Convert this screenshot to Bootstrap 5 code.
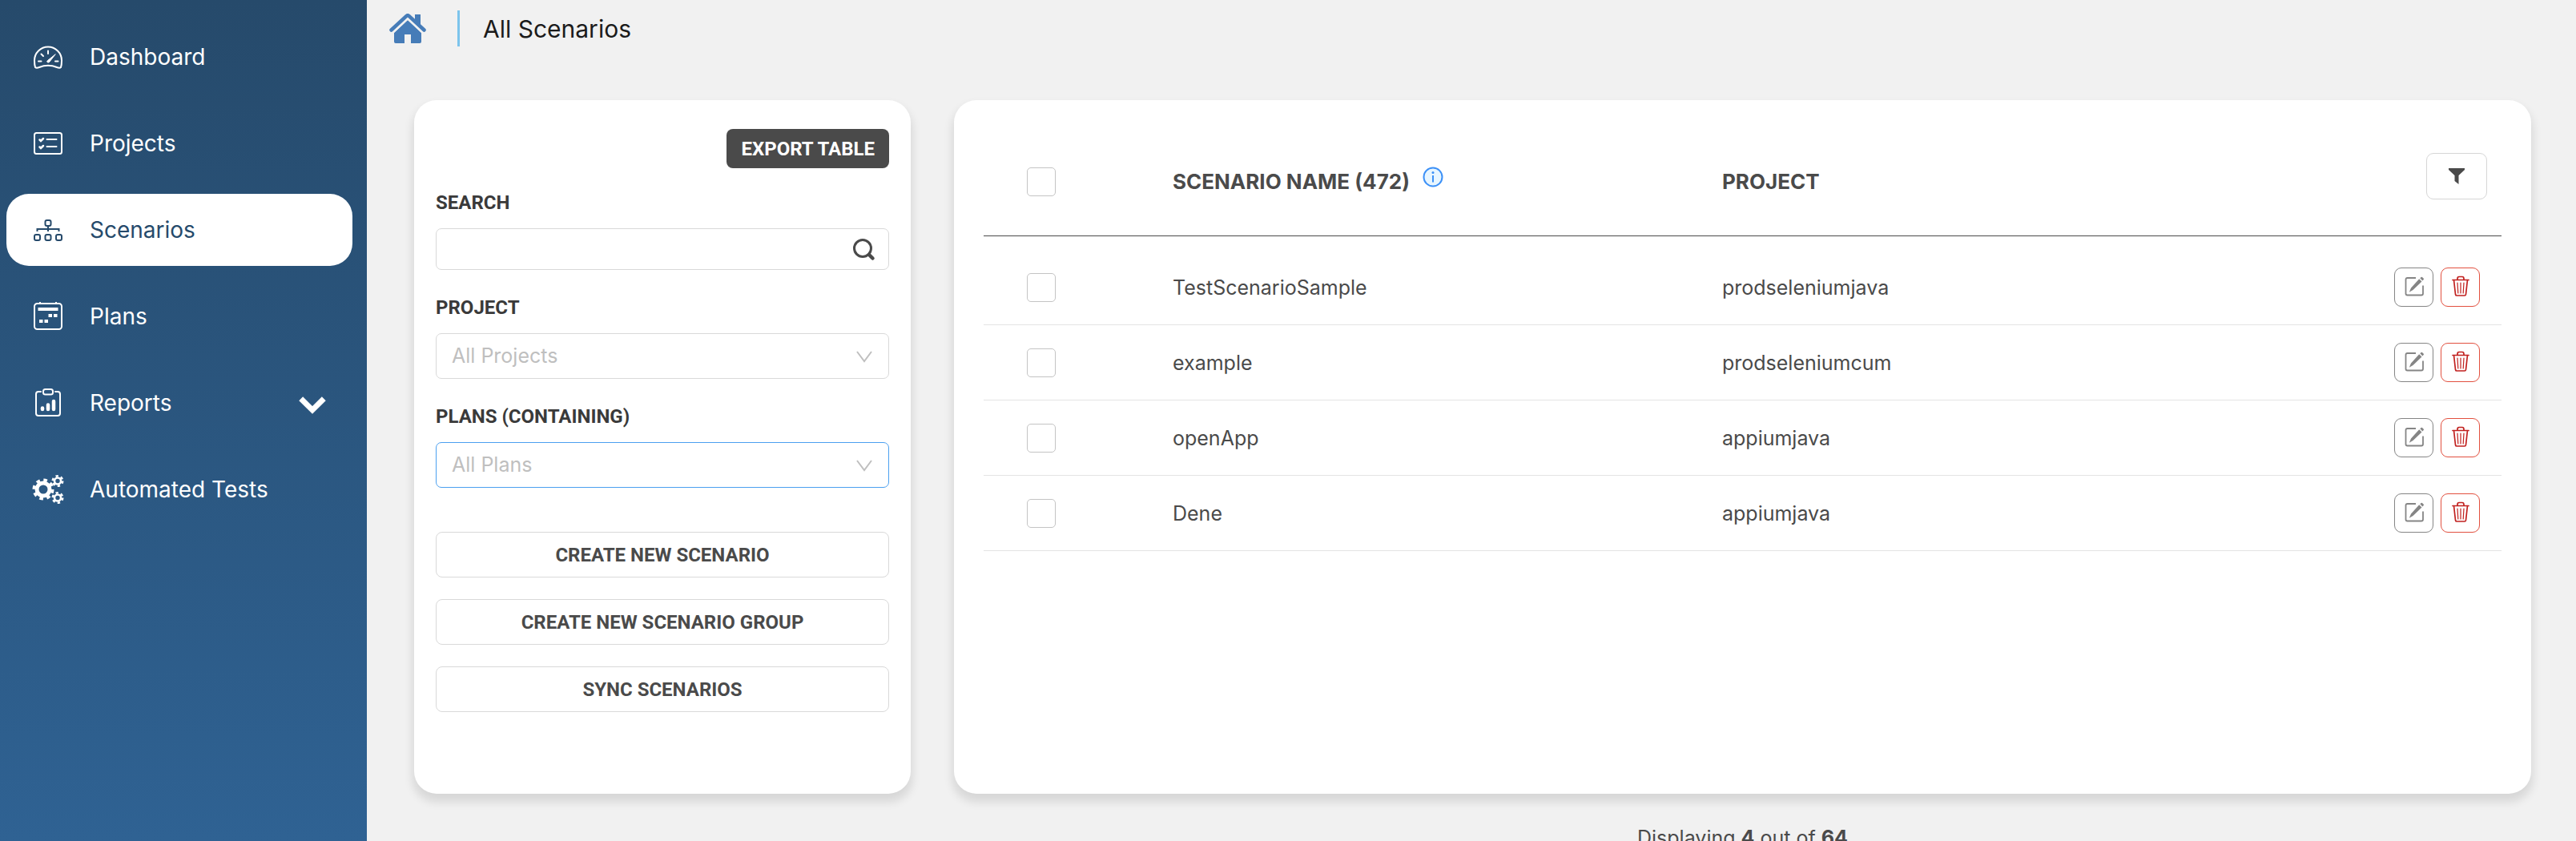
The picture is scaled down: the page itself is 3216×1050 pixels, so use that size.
<!DOCTYPE html>
<html lang="en">
<head>
<meta charset="utf-8">
<meta name="viewport" content="width=device-width, initial-scale=1">
<title>All Scenarios</title>
<link href="https://cdn.jsdelivr.net/npm/bootstrap@5.3.0/dist/css/bootstrap.min.css" rel="stylesheet">
<style>
  body { font-family: Inter, "Liberation Sans", sans-serif; font-size: 25px; line-height: 32px; color: #4a4a4a; background: #f1f1f1; }
  .shell { height: 100vh; }
  .sidebar { width: 458px; padding: 26px 18px 0 8px; background: linear-gradient(#264a6b, #2f6293); }
  .sidebar .nav { gap: 18px; }
  .sidebar .nav-link { display: flex; align-items: center; gap: 32px; height: 90px; padding: 0 32px; border-radius: 28px; color: #fff; font-size: 28px; }
  .sidebar .nav-link svg { width: 40px; height: 40px; flex: none; }
  .sidebar .nav-link.active { background: #fff; color: #264a6b; }
  .sidebar .nav-link .chev { width: 36px; height: 36px; margin-left: auto; }
  .topline { height: 71px; padding-left: 28px; }
  .crumb { font-size: 30px; color: #1b1b1b; }
  .crumb-rule { width: 3px; height: 45px; background: #7cc4ec; margin: 0 29px 0 39px; }
  .panels { gap: 54px; padding: 54px 56px 0 59px; }
  .panel-box { background: #fff; border: 0; border-radius: 28px; box-shadow: 0 8px 12px 2px rgba(0,0,0,.11); height: 866px; }
  .filters { width: 620px; flex: none; padding: 36px 27px 0; }
  .din { font-family: Roboto, "Liberation Sans", sans-serif; font-weight: 700; font-size: 24px; line-height: 30px; }
  .btn-export { background: #4a4a4a; color: #fff; border-radius: 8px; height: 49px; padding: 0 17px; align-self: flex-end; margin-bottom: 28px; }
  .btn-export:hover { background: #333; color: #fff; }
  .filters label { color: #3a3a3a; margin-bottom: 17px; }
  .field-gap { margin-bottom: 32px; }
  .filters .form-control, .filters .form-select { border: 1px solid #d9d9d9; border-radius: 7px; font-size: 25px; height: 57px; padding: 0 19px; color: #bfbfbf; box-shadow: none; }
  .filters .form-select { background-position: right 19px center; background-size: 22px 22px;
    background-image: url("data:image/svg+xml,%3csvg xmlns='http://www.w3.org/2000/svg' viewBox='0 0 22 22'%3e%3cpath d='M2 5 11 17 20 5' fill='none' stroke='%23bfbfbf' stroke-width='2'/%3e%3c/svg%3e"); }
  .filters .form-control { height: 52px; padding-right: 60px; }
  .filters .form-select.is-open { border-color: #4ba0f0; }
  .search-ico { position: absolute; right: 17px; top: 12px; width: 29px; height: 29px; }
  .line-set { gap: 27px; margin-top: 55px; }
  .btn-line { height: 57px; border: 1px solid #d9d9d9; border-radius: 8px; color: #4a4a4a; background: #fff; }
  .results { flex: 1; min-width: 0; }
  .list { padding: 30px 37px 0; }
  .list table { table-layout: fixed; border-collapse: separate; border-spacing: 0; color: #4a4a4a; margin: 0; --bs-table-bg: transparent; }
  .list th, .list td { padding: 0; vertical-align: middle; color: #4a4a4a; }
  .list .table > thead > tr > th { height: 140px; padding: 5px 0 0; border-bottom: 1px solid #4a4a4a; font-weight: 700; font-size: 26px; }
  .list .table > tbody > tr > td { height: 94px; padding: 0; border-bottom: 1px solid #e4e4e4; }
  .list .table > tbody > tr.spacer > td { height: 17px; border: 0; }
  .c-pick { width: 236px; } .c-name { width: 36.2%; } .c-act { width: 161px; }
  .list .form-check-input { width: 36px; height: 36px; margin: 0 0 0 54px; border: 1px solid #c4c4c4; border-radius: 5px; float: none; display: block; }
  .name-head { gap: 16px; }
  .name-head svg { margin-bottom: 12px; }
  .btn-filter { width: 76px; height: 58px; border: 1px solid #d6d6d6; border-radius: 9px; margin: 0 18px 14px 0; }
  .acts { gap: 9px; padding-right: 27px; }
  .btn-ico { width: 49px; height: 49px; border-radius: 9px; border: 1px solid #858585; }
  .btn-ico.del { border-color: #e2503f; }
  .btn-ico svg { width: 26px; height: 26px; display: block; margin-bottom: 4px; }
  .foot { padding-top: 39px; }
</style>
</head>
<body>
<svg width="0" height="0" class="position-absolute" aria-hidden="true">
  <symbol id="i-edit" viewBox="0 0 26 26"><path d="M15 3H4.500Q2.500 3 2.500 5V22.500Q2.500 24.500 4.500 24.500H22Q24 24.500 24 22.500V12.500" fill="none" stroke="#858585" stroke-width="1.800"/><path d="M19.200 4.300 22.500 7.600 11.500 18 6.800 20.800 9 15.500ZM20.300 3.200 21.600 1.900Q22.300 1.400 23 2L24.800 3.700Q25.300 4.500 24.700 5.100L23.400 6.400Z" fill="#858585"/></symbol>
  <symbol id="i-del" viewBox="0 0 26 26"><g fill="none" stroke="#c1211f" stroke-width="1.700" stroke-linecap="round" stroke-linejoin="round"><path d="M3 5.500H23M4.500 5.500 6.500 23.500Q6.800 25 8 25H18Q19.300 25 19.500 23.500L21.500 5.500M9 5.500V4Q9 1.500 11 1.500H15Q17 1.500 17 4V5.500"/><path stroke-width="1.200" d="M9 9 9.800 22M13 9V22M17 9 16.200 22"/></g></symbol>
</svg>
<div class="shell d-flex overflow-hidden">
  <aside class="sidebar flex-shrink-0">
    <nav class="nav flex-column">
      <a class="nav-link" href="#"><svg viewBox="0 0 40 40" fill="none" stroke="currentColor" stroke-width="2" stroke-linecap="round"><path d="M4 33Q3 30 3 24.500A17 17 0 0 1 37 24.500Q37 30 36 33Q34.500 34.500 31 33Q20 28.500 9 33Q5.500 34.500 4 33Z"/><path d="M8 25.500H11.500M29 25.500H32.500M11.500 16.500 14 19M20 12.500V16"/><path d="M29 17 21.500 26.500Q20 27.500 19 26.500T19.500 24.500Z" fill="currentColor" stroke-width="1"/></svg>Dashboard</a>
      <a class="nav-link" href="#"><svg viewBox="0 0 40 40" fill="none" stroke="currentColor" stroke-width="2" stroke-linecap="round"><rect x="3" y="7" width="34" height="26" rx="2.500"/><path d="M18.500 15H30.500M18.500 24H30.500"/><path d="M9.500 15.500 11 17 14 14M9.500 24.500 11 26 14 23" stroke-width="2.500"/></svg>Projects</a>
      <a class="nav-link active" href="#" aria-current="page"><svg viewBox="0 0 40 40" fill="none" stroke="currentColor" stroke-width="2"><rect x="16.500" y="8" width="7" height="7" rx="2"/><rect x="3" y="26" width="7" height="7" rx="2"/><rect x="16.500" y="26" width="7" height="7" rx="2"/><rect x="30" y="26" width="7" height="7" rx="2"/><path d="M20 15V22M6.500 22V19H33.500V22"/></svg>Scenarios</a>
      <a class="nav-link" href="#"><svg viewBox="0 0 40 40" fill="none" stroke="currentColor" stroke-width="2"><rect x="3" y="4" width="34" height="32" rx="3.500"/><path d="M10 4V2M30 4V2" /><path d="M7.500 11H32.500" stroke-width="4"/><path d="M20.500 19H25M27 19H31.500M9 26H13.500M15.500 26H20" stroke-width="4"/></svg>Plans</a>
      <a class="nav-link" href="#"><svg viewBox="0 0 40 40" fill="none" stroke="currentColor" stroke-width="2" stroke-linecap="round"><path d="M11 6H8Q5 6 5 9V33Q5 36 8 36H32Q35 36 35 33V9Q35 6 32 6H29"/><rect x="14" y="3" width="12" height="6.500" rx="2.500"/><path d="M13 26.500V28M20 22.500V28M27 18V28" stroke-width="4.500"/></svg>Reports
        <svg class="chev" viewBox="0 0 34 34"><path d="M3.500 12 17 25.500 30.500 12" fill="none" stroke="currentColor" stroke-width="6.500" /></svg></a>
      <a class="nav-link" href="#"><svg viewBox="0 0 40 40" fill="none" stroke="currentColor"><circle cx="14" cy="20" r="8" stroke-width="5"/><circle cx="14" cy="20" r="11.500" stroke-width="4" stroke-dasharray="4.516 4.516"/><circle cx="32" cy="9.500" r="4" stroke-width="2.600"/><circle cx="32" cy="9.500" r="6.200" stroke-width="2.600" stroke-dasharray="3.246 3.246"/><circle cx="32" cy="30.500" r="4" stroke-width="2.600"/><circle cx="32" cy="30.500" r="6.200" stroke-width="2.600" stroke-dasharray="3.246 3.246"/></svg>Automated Tests</a>
    </nav>
  </aside>
  <main class="flex-grow-1 overflow-hidden">
    <header class="topline d-flex align-items-center">
      <a href="#" aria-label="Home"><svg width="46" height="38" viewBox="0 0 46 38" class="d-block"><path d="M32 8V1H39V16L32 10Z" fill="#467cb8"/><path d="M23 8 40 24V35Q40 37 38 37H27V26H19V37H8Q6 37 6 35V24Z" fill="#467cb8"/><path d="M2.500 20.500 21.500 3Q23 1.500 24.500 3L43.500 20.500" fill="none" stroke="#467cb8" stroke-width="4.500" stroke-linecap="round"/><path d="M4.500 24 23 6.800 41.500 24" fill="none" stroke="#f1f1f1" stroke-width="1.800"/></svg></a>
      <span class="crumb-rule"></span>
      <span class="crumb">All Scenarios</span>
    </header>
    <div class="panels d-flex">
      <form class="panel-box filters d-flex flex-column">
        <button type="button" class="btn btn-export din">EXPORT TABLE</button>
        <label class="din" for="q">SEARCH</label>
        <div class="position-relative field-gap">
          <input id="q" type="text" class="form-control">
          <svg class="search-ico" viewBox="0 0 29 29" fill="none" stroke="#4a4a4a" stroke-linecap="round"><circle cx="13" cy="13" r="10.500" stroke-width="3"/><path d="M21 21 25.500 25.500" stroke-width="4.500"/></svg>
        </div>
        <label class="din" for="prj">PROJECT</label>
        <select id="prj" class="form-select field-gap"><option>All Projects</option></select>
        <label class="din" for="pln">PLANS (CONTAINING)</label>
        <select id="pln" class="form-select is-open"><option>All Plans</option></select>
        <div class="d-flex flex-column line-set">
          <button type="button" class="btn btn-line din">CREATE NEW SCENARIO</button>
          <button type="button" class="btn btn-line din">CREATE NEW SCENARIO GROUP</button>
          <button type="button" class="btn btn-line din">SYNC SCENARIOS</button>
        </div>
      </form>
      <div class="results">
        <section class="panel-box list">
          <table class="table">
            <colgroup><col class="c-pick"><col class="c-name"><col><col class="c-act"></colgroup>
            <thead><tr>
              <th><input class="form-check-input" type="checkbox" aria-label="Select all"></th>
              <th><div class="name-head d-flex align-items-center">SCENARIO NAME (472)<svg width="26" height="26" viewBox="0 0 26 26"><circle cx="13" cy="13" r="11.500" fill="#e8f6ff" stroke="#3d91f7" stroke-width="2"/><circle cx="13" cy="7.500" r="1.500" fill="#3d91f7"/><path d="M13 11V19.500" stroke="#3d91f7" stroke-width="2"/></svg></div></th>
              <th>PROJECT</th>
              <th><div class="d-flex justify-content-end"><button class="btn btn-filter p-0" aria-label="Filter"><svg width="20" height="20" viewBox="0 0 20 20" class="d-block mx-auto"><path d="M0 0H20V2L12.500 9V20L7.500 16V9L0 2Z" fill="#4a4a4a"/></svg></button></div></th>
            </tr></thead>
            <tbody>
              <tr class="spacer"><td colspan="4"></td></tr>
              <tr><td><input class="form-check-input" type="checkbox" aria-label="Select TestScenarioSample"></td><td>TestScenarioSample</td><td>prodseleniumjava</td><td><div class="acts d-flex justify-content-end"><button class="btn btn-ico p-0 d-flex align-items-center justify-content-center" aria-label="Edit"><svg><use href="#i-edit"/></svg></button><button class="btn btn-ico del p-0 d-flex align-items-center justify-content-center" aria-label="Delete"><svg><use href="#i-del"/></svg></button></div></td></tr>
              <tr><td><input class="form-check-input" type="checkbox" aria-label="Select example"></td><td>example</td><td>prodseleniumcum</td><td><div class="acts d-flex justify-content-end"><button class="btn btn-ico p-0 d-flex align-items-center justify-content-center" aria-label="Edit"><svg><use href="#i-edit"/></svg></button><button class="btn btn-ico del p-0 d-flex align-items-center justify-content-center" aria-label="Delete"><svg><use href="#i-del"/></svg></button></div></td></tr>
              <tr><td><input class="form-check-input" type="checkbox" aria-label="Select openApp"></td><td>openApp</td><td>appiumjava</td><td><div class="acts d-flex justify-content-end"><button class="btn btn-ico p-0 d-flex align-items-center justify-content-center" aria-label="Edit"><svg><use href="#i-edit"/></svg></button><button class="btn btn-ico del p-0 d-flex align-items-center justify-content-center" aria-label="Delete"><svg><use href="#i-del"/></svg></button></div></td></tr>
              <tr><td><input class="form-check-input" type="checkbox" aria-label="Select Dene"></td><td>Dene</td><td>appiumjava</td><td><div class="acts d-flex justify-content-end"><button class="btn btn-ico p-0 d-flex align-items-center justify-content-center" aria-label="Edit"><svg><use href="#i-edit"/></svg></button><button class="btn btn-ico del p-0 d-flex align-items-center justify-content-center" aria-label="Delete"><svg><use href="#i-del"/></svg></button></div></td></tr>
            </tbody>
          </table>
        </section>
        <div class="foot text-center">Displaying <b>4</b> out of <b>64</b></div>
      </div>
    </div>
  </main>
</div>
<script src="https://cdn.jsdelivr.net/npm/bootstrap@5.3.0/dist/js/bootstrap.bundle.min.js"></script>
</body>
</html>
